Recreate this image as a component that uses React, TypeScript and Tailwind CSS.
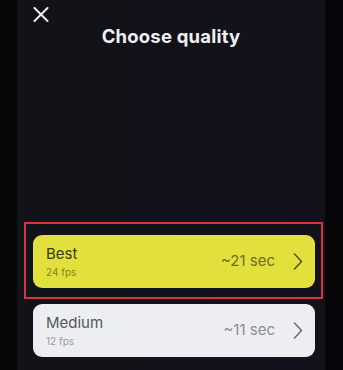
import React from 'react';

const Chevron: React.FC<{ color: string }> = ({ color }) => (
  <svg width="10" height="17" viewBox="0 0 10 17" fill="none">
    <polyline points="1.5,1 8.5,8.5 1.5,16" stroke={color} strokeWidth="1.6" strokeLinecap="round" strokeLinejoin="round" />
  </svg>
);

type Option = {
  name: string;
  fps: string;
  time: string;
  card: string;
  title: string;
  sub: string;
  right: string;
  chevron: string;
};

const QualityCard: React.FC<{ o: Option }> = ({ o }) => (
  <div className={`flex items-center h-[53px] rounded-[9px] pl-[13px] pr-[12px] ${o.card}`}>
    <div className="flex flex-col flex-1">
      <span className={`text-[15px] leading-[18px] font-normal ${o.title}`}>{o.name}</span>
      <span className={`text-[10px] leading-[13px] mt-[3px] ${o.sub}`}>{o.fps}</span>
    </div>
    <span className={`text-[15px] mr-[18px] ${o.right}`}>{o.time}</span>
    <Chevron color={o.chevron} />
  </div>
);

export default function App() {
  const best: Option = {
    name: 'Best',
    fps: '24 fps',
    time: '~21 sec',
    card: 'bg-[#e2e03c]',
    title: 'text-[#3b3a12]',
    sub: 'text-[#86841f]',
    right: 'text-[#6e6c1c]',
    chevron: '#55541a',
  };
  const medium: Option = {
    name: 'Medium',
    fps: '12 fps',
    time: '~11 sec',
    card: 'bg-[#eceef1]',
    title: 'text-[#55575c]',
    sub: 'text-[#9a9ca1]',
    right: 'text-[#8a8c91]',
    chevron: '#6c6e73',
  };

  return (
    <div
      className="w-[343px] h-[370px] bg-[#060608] flex pl-[17px] pr-[18px] overflow-hidden"
      style={{ fontFamily: 'Inter, "Noto Sans", sans-serif' }}
    >
      <div className="flex-1 flex flex-col bg-gradient-to-r from-[#111318] via-[#12131a] to-[#14111b]">
        <div className="relative h-[56px]">
          <svg className="absolute left-[16px] top-[7px]" width="16" height="15" viewBox="0 0 16 15" fill="none">
            <line x1="1.5" y1="1" x2="14.5" y2="14" stroke="#eceef2" strokeWidth="2" strokeLinecap="round" />
            <line x1="14.5" y1="1" x2="1.5" y2="14" stroke="#eceef2" strokeWidth="2" strokeLinecap="round" />
          </svg>
          <h1 className="pt-[24px] text-center text-[18.5px] leading-[24px] font-bold text-[#eef0f4] tracking-[0.2px]">
            Choose quality
          </h1>
        </div>
        <div className="mt-[166px] ml-[7px] mr-[2px] border-2 border-[#d5353f] pt-[11px] pb-[9px] pl-[7px] pr-[6px]">
          <QualityCard o={best} />
        </div>
        <div className="mt-[5px] ml-[16px] mr-[10px]">
          <QualityCard o={medium} />
        </div>
      </div>
    </div>
  );
}
